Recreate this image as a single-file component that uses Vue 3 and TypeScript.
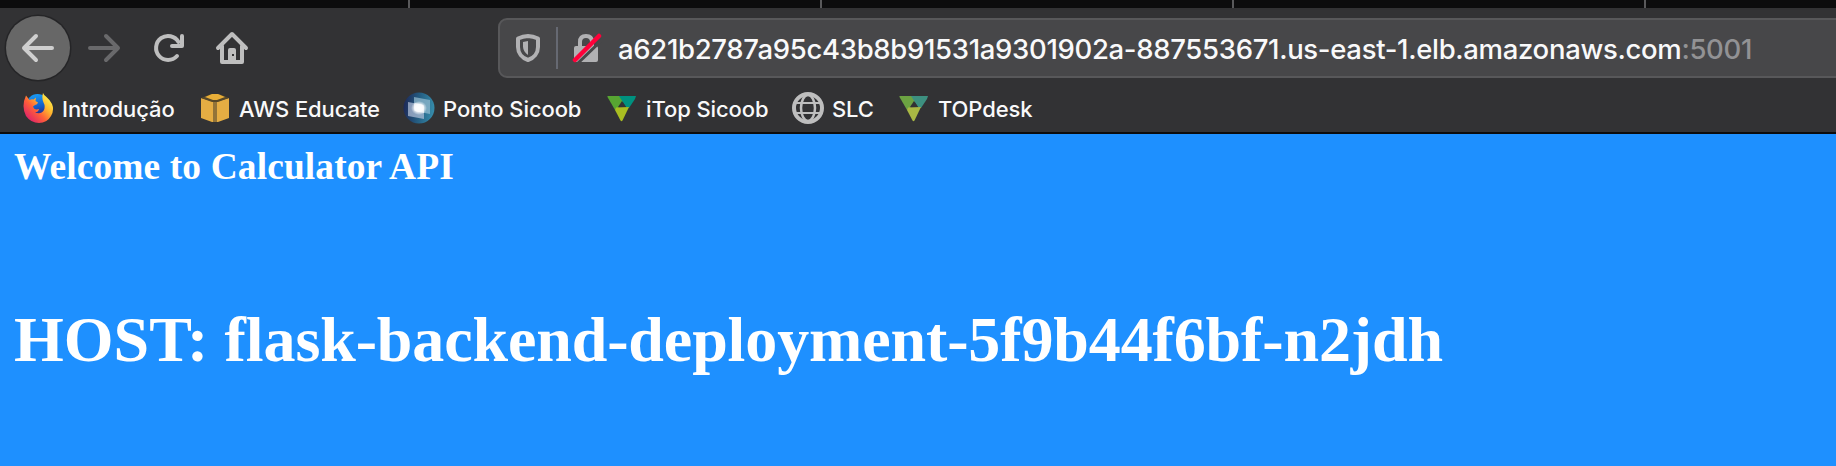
<script setup lang="ts">
interface Bookmark {
  label: string
  icon: 'firefox' | 'cube' | 'window' | 'triangle' | 'globe'
  colors?: [string, string, string]
}

const bookmarks: Bookmark[] = [
  { label: 'Introdução', icon: 'firefox' },
  { label: 'AWS Educate', icon: 'cube' },
  { label: 'Ponto Sicoob', icon: 'window' },
  { label: 'iTop Sicoob', icon: 'triangle', colors: ['#57a532', '#00917f', '#a9be21'] },
  { label: 'SLC', icon: 'globe' },
  { label: 'TOPdesk', icon: 'triangle', colors: ['#6ca342', '#3d9080', '#a9b944'] },
]
</script>

<template>
  <main class="browser">
    <div class="tabs"><i v-for="n in 4" :key="n" class="tab"></i></div>
    <header class="chrome">
      <nav class="toolbar">
        <span class="back">
          <svg width="64" height="64" viewBox="0 0 64 64" fill="none" stroke="#cfcfcf" stroke-width="4" stroke-linecap="round" stroke-linejoin="round"><path d="M46 32H18M30 20 18 32l12 12" /></svg>
        </span>
        <svg class="nav" width="64" height="64" viewBox="0 0 64 64" fill="none" stroke="#69696b" stroke-width="4" stroke-linecap="round" stroke-linejoin="round"><path d="M18 32h28M34 20l12 12-12 12" /></svg>
        <svg class="nav" width="64" height="64" viewBox="0 0 64 64" fill="none" stroke="#bebebe" stroke-width="4" stroke-linecap="round" stroke-linejoin="round"><path d="M39 40A12 12 0 1 1 40.500 26M44 20v10H34" /></svg>
        <svg class="nav home" width="64" height="64" viewBox="0 0 64 64" fill="none" stroke="#bebebe" stroke-width="4" stroke-linecap="round" stroke-linejoin="round"><path d="M18 32 32 18l14 14M22 30v16h20V30" /><path d="M28 46V34q0-2 2-2h4q2 0 2 2v12z" fill="#bebebe" stroke="none" /><path d="M32 38h2v2h-2z" fill="#323234" stroke="none" /></svg>
        <div class="address">
          <svg class="shield" width="24" height="28" viewBox="0 0 24 28"><path d="M2 4.500Q7 2.200 12 2q5 .2 10 2.500V13c0 6-4 11-10 13C6 24 2 19 2 13z" fill="none" stroke="#b1b1b3" stroke-width="4" stroke-linejoin="round" /><path d="M12 7v14c-3-2-5-5-5-8.500V8z" fill="#b1b1b3" /></svg>
          <i class="divider"></i>
          <svg class="lock" width="30" height="30" viewBox="0 0 30 30"><path d="M8 14V9q0-6 6-6t6 6v5" fill="none" stroke="#b1b1b3" stroke-width="4" /><path d="M2 15q0-2 2-2h20q2 0 2 2v12q0 2-2 2H4q-2 0-2-2z" fill="#b1b1b3" /><path d="M5 31 31 6" stroke="#474749" stroke-width="3" /><path d="M3 27 27 3" stroke="#ff0039" stroke-width="4.500" stroke-linecap="round" /></svg>
          <span class="url">a621b2787a95c43b8b91531a9301902a-887553671.us-east-1.elb.amazonaws.com<span class="port">:5001</span></span>
        </div>
      </nav>
      <nav class="bookmarks">
        <a v-for="b in bookmarks" :key="b.label" class="bookmark">
          <svg width="32" height="32" viewBox="0 0 32 32">
            <template v-if="b.icon === 'firefox'">
              <defs>
                <linearGradient id="flame" x1=".85" y1=".1" x2=".15" y2=".8"><stop offset="0" stop-color="#fff14a" /><stop offset=".35" stop-color="#ffb52e" /><stop offset=".65" stop-color="#ff6038" /><stop offset="1" stop-color="#e42b63" /></linearGradient>
                <linearGradient id="sphere" x1=".4" y1="0" x2=".6" y2="1"><stop offset="0" stop-color="#189cf5" /><stop offset=".6" stop-color="#145ac5" /><stop offset="1" stop-color="#321e78" /></linearGradient>
              </defs>
              <circle cx="15.500" cy="13" r="11" fill="url(#sphere)" />
              <path d="M4 3.500 7.500 8q2-1 4-.5L14 5.500l-.5 3.500 2.500 1.500q-.5 2-3 2.500l-2 1.500 1 2q2 1.500 5 .5-.5 3-4 3.500 6 2.500 9-2.500 1.500-4-.5-7.500-2-4.500-.5-9.500 1 2.500 3.500 4 3.500 3 5.500 7 2.500 6-1 12-4 7-12 7T4 24Q-1 14 4 3.500z" fill="url(#flame)" />
            </template>
            <template v-else-if="b.icon === 'cube'">
              <path d="m2 6 14 4 14-4v20l-11 4h-6L2 26z" fill="#e5ad43" />
              <path d="m2 6 10-4h8l10 4-11 4h-6z" fill="#574829" />
              <path d="m6 5 7-3h6l7 3-8 3h-4z" fill="#e8ae38" />
              <path d="M14 10h4v20h-4z" fill="#927338" />
            </template>
            <template v-else-if="b.icon === 'window'">
              <defs>
                <linearGradient id="disc" x1="0" x2="1" y2=".1"><stop offset="0" stop-color="#1c2454" /><stop offset=".55" stop-color="#255f83" /><stop offset="1" stop-color="#3589a8" /></linearGradient>
                <radialGradient id="glow"><stop offset="0" stop-color="#fff" /><stop offset=".5" stop-color="#fff" stop-opacity=".9" /><stop offset="1" stop-color="#fff" stop-opacity="0" /></radialGradient>
              </defs>
              <circle cx="16" cy="16" r="15.500" fill="url(#disc)" />
              <path d="m11 5 16 3v14l-16-3z" fill="#91bacd" opacity=".75" />
              <path d="m5 10 16 3v14L5 24z" fill="#b5c2da" opacity=".7" />
              <path d="m12 11 7 1.500q2 .5 2 2.500v6l-7-1.500q-3-.5-3-3.500v-4z" fill="#fff" opacity=".65" />
              <ellipse cx="16" cy="16" rx="8" ry="7" fill="url(#glow)" />
            </template>
            <template v-else-if="b.icon === 'triangle' && b.colors">
              <path d="M1.500 4H15l3 5-6 7-3 2L1.500 5z" :fill="b.colors[0]" />
              <path d="M13 4h17l-1 3-6 9-3-1z" :fill="b.colors[1]" />
              <path d="m10 15.500 13-.5-6.500 13.500q-1 1.500-2 0L9 18z" :fill="b.colors[2]" />
              <path d="m16 9 4 6h-8z" fill="#323234" />
            </template>
            <g v-else fill="none" stroke="#bebebe">
              <circle cx="16" cy="16" r="14" stroke-width="4" />
              <ellipse cx="16" cy="16" rx="7" ry="13" stroke-width="2.500" />
              <path d="M4 11h24M4 21h24" stroke-width="2" />
            </g>
          </svg>
          <span class="label">{{ b.label }}</span>
        </a>
      </nav>
    </header>
    <section class="page">
      <h3>Welcome to Calculator API</h3>
      <h1>HOST: fl<span class="host">ask-backend-deployment-5f9b44f6bf-n2jdh</span></h1>
    </section>
  </main>
</template>

<style>
body { margin: 0; background: #1e90ff; }
</style>

<style scoped>
.browser { width: 100%; height: 466px; overflow: hidden; font-family: Inter, "Liberation Sans", sans-serif; background: #1e90ff; }
.tabs { display: flex; height: 8px; padding-left: -2px; background: #0c0c0d; }
.tab { box-sizing: border-box; width: 412px; border-right: 2px solid #59595b; }
.tab:first-child { width: 410px; }
.chrome { box-sizing: border-box; height: 126px; background: #323234; border-bottom: 2px solid #0c0c0d; }
.toolbar { display: flex; height: 80px; align-items: flex-start; padding: 8px 0 0 6px; box-sizing: border-box; }
.back { width: 64px; height: 64px; border-radius: 50%; background: #676767; box-shadow: 0 0 0 1.500px #252527; }
.nav { flex: none; margin-left: 2px; }
.home { margin-left: -2px; }
.address { display: flex; align-items: center; box-sizing: border-box; flex: 1; height: 60px; margin: 2px -10px 0 234px; border: 2px solid #58585a; border-radius: 9px; background: #474749; }
.shield { margin-left: 16px; }
.divider { width: 2px; height: 42px; margin: 0 14px 0 16px; background: #666972; }
.lock { flex: none; }
.url { margin: 2px 0 0 16px; font-size: 27.500px; font-weight: 500; letter-spacing: -0.32px; color: #f9f9fa; white-space: nowrap; }
.port { color: #929294; }
.bookmarks { display: grid; grid-template-columns: 177px 204px 203px 186px 106px auto; padding: 4px 0 0 22px; }
.bookmark { display: flex; align-items: center; height: 32px; }
.bookmark svg { flex: none; }
.label { margin: 2px 0 0 8px; font-size: 22px; font-weight: 500; line-height: 32px; letter-spacing: -0.1px; color: #f9f9fa; white-space: nowrap; }
.page { padding: 11px 14px; color: #fff; font-family: "Liberation Serif", serif; }
h1, h3 { margin: 0; font-weight: 700; white-space: nowrap; }
h3 { font-size: 37.440px; line-height: 43px; letter-spacing: 0.12px; }
h1 { margin-top: 115px; font-size: 64px; line-height: 74px; }
.host { letter-spacing: -0.12px; }
</style>
